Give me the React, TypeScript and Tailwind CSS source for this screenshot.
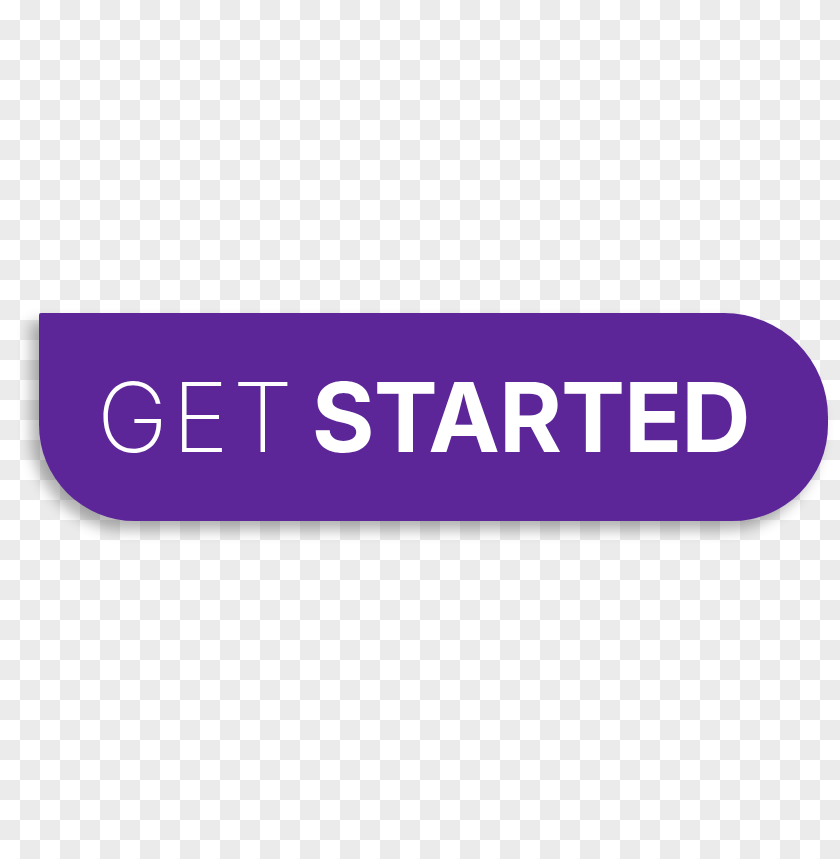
export default function App() {
  return (
    <div className="h-[859px] w-full overflow-hidden bg-[conic-gradient(#ebebeb_25%,#ffffff_0_50%,#ebebeb_0_75%,#ffffff_0)] bg-[length:40px_40px] pl-[39px] pt-[313px]">
      <button
        type="button"
        className="flex h-[208px] w-[789px] items-center rounded-tl-[2px] rounded-tr-[104px] rounded-br-[96px] rounded-bl-[96px] bg-[#5c2699] pl-[58px] text-white shadow-[-8px_9px_14px_rgba(0,0,0,0.3)]"
        style={{ fontFamily: "Inter, 'Noto Sans', sans-serif" }}
      >
        <span className="text-[96px] leading-none font-extralight tracking-[4px]">GET</span>
        <span className="ml-[15px] text-[96px] leading-none font-bold tracking-[-1px]">STARTED</span>
      </button>
    </div>
  );
}
